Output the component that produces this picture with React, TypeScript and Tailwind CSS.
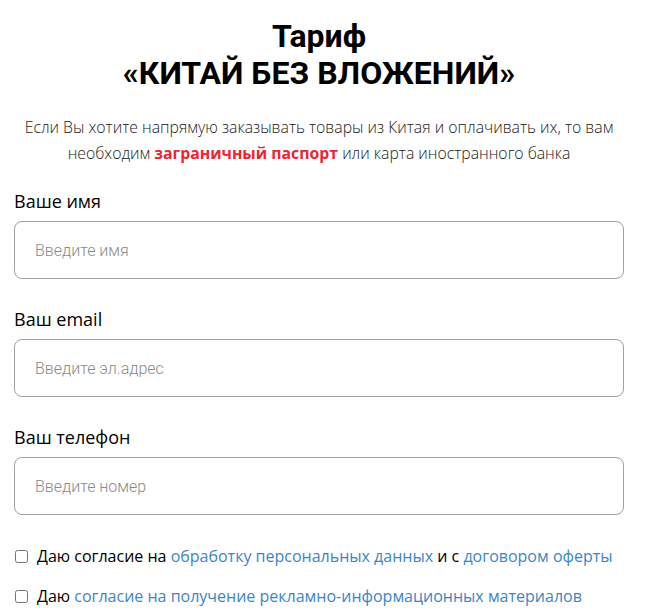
export default function App() {
  const fields = [
    { label: "Ваше имя", placeholder: "Введите имя" },
    { label: "Ваш email", placeholder: "Введите эл.адрес" },
    { label: "Ваш телефон", placeholder: "Введите номер" },
  ];
  return (
    <div className="w-[651px] h-[615px] bg-white overflow-hidden pl-[14px] pt-[18px] font-['Open_Sans',sans-serif]">
      <div className="w-[610px]">
        <h1 className="text-center font-['Roboto',sans-serif] font-bold text-[32px] leading-[37px] text-black">
          Тариф
          <br />
          «КИТАЙ БЕЗ ВЛОЖЕНИЙ»
        </h1>
        <p className="mt-[22px] text-center text-[15.8px] leading-[26px] font-light text-[#222] whitespace-nowrap">
          Если Вы хотите напрямую заказывать товары из Китая и оплачивать их, то вам
          <br />
          необходим <span className="font-bold text-[#f0232f]">заграничный паспорт</span> или карта иностранного банка
        </p>
        <div className="mt-[23px] flex flex-col gap-[28px]">
          {fields.map((f) => (
            <div key={f.label}>
              <div className="text-[18px] leading-[24px] text-black">{f.label}</div>
              <input
                className="mt-[8px] w-[610px] h-[58px] rounded-[8px] border border-[#a0a0a0] px-[20px] text-[16px] font-['Roboto',sans-serif] font-light placeholder:text-[#8a8a8a] outline-none"
                placeholder={f.placeholder}
              />
            </div>
          ))}
        </div>
        <div className="mt-[30px] flex flex-col gap-[18px] text-[16px] leading-[22px] text-black whitespace-nowrap">
          <label className="flex items-center gap-[9px] pl-[1px]">
            <input type="checkbox" className="w-[13px] h-[13px]" />
            <span>
              Даю согласие на <a className="text-[#3a86c8]">обработку персональных данных</a> и с{" "}
              <a className="text-[#3a86c8]">договором оферты</a>
            </span>
          </label>
          <label className="flex items-center gap-[9px] pl-[1px]">
            <input type="checkbox" className="w-[13px] h-[13px]" />
            <span>
              Даю <a className="text-[#3a86c8]">согласие на получение рекламно-информационных материалов</a>
            </span>
          </label>
        </div>
      </div>
    </div>
  );
}
